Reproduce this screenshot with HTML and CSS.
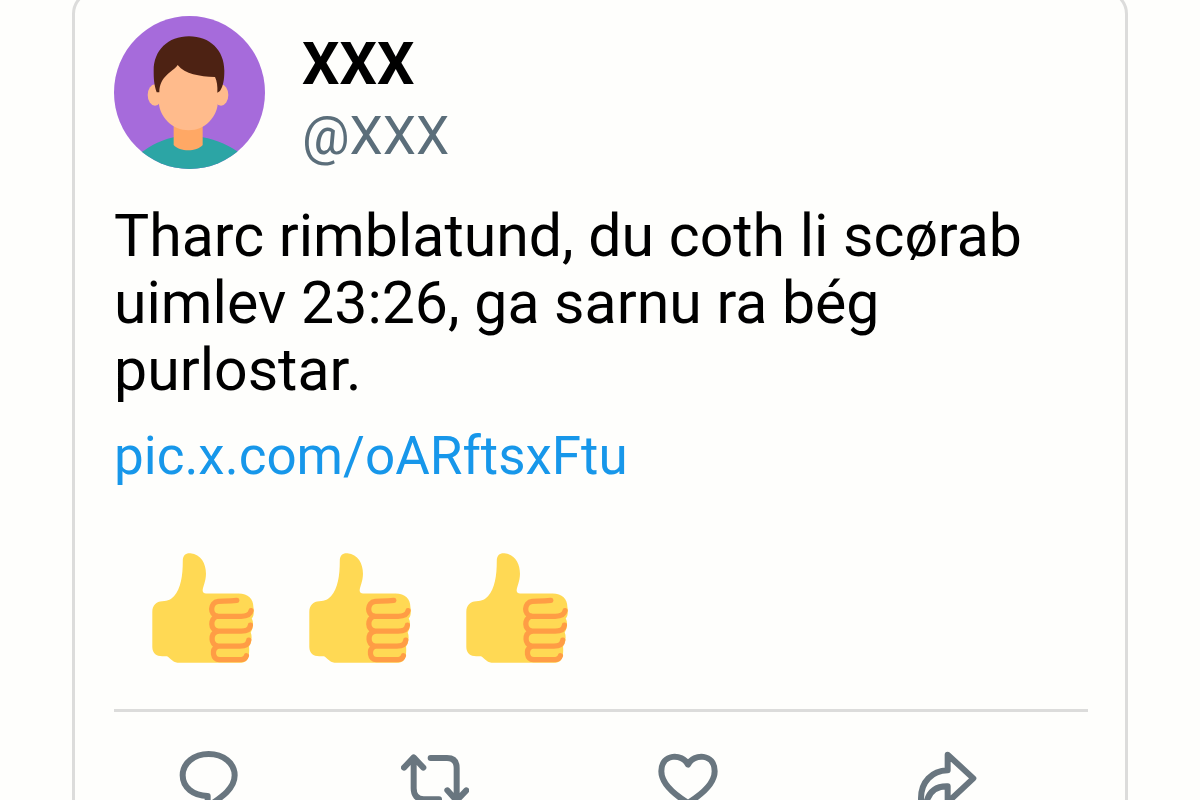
FILE: index.html
```
<!DOCTYPE html>
<html>
  <head>
    <meta charset="utf-8">
    <meta name="viewport" content="width=device-width,initial-scale=1.0">
    <title>Post by XXX</title>
    <link rel="stylesheet" href="styles.css">
  </head>

  <body>
    <!-- Shapes used more than once -->
    <svg class="sprite" aria-hidden="true">
      <symbol id="thumb" viewBox="36 38 306 332">
        <path fill="#ffd954" d="M128 62 C128 45 137 38 151 39 C183 42 198 70 198 101 C198 125 188 140 188 152 Q189 160 198 160 H296 C326 160 341 177 341 200 C344 217 342 229 336 236 C343 248 340 266 333 278 C338 290 336 308 328 320 C330 345 326 369 306 369 H112 C97 369 89 353 80 350 H66 C48 350 36 340 36 322 V216 C36 196 48 185 66 184 C84 183 94 177 102 168 C122 144 128 108 128 62 Z"/>
        <g fill="none" stroke="#ff9d45" stroke-width="16" stroke-linecap="round" stroke-linejoin="round">
          <path d="M291 181 C268 184 248 183 235 184 C210 187 208 225 233 229 H304 C322 229 332 223 334 212"/>
          <path d="M231 229 C210 236 210 270 234 274 H304 C322 274 331 267 332 256"/>
          <path d="M231 275 C211 282 211 315 234 319 H300 C317 319 326 312 327 301"/>
          <path d="M231 320 C215 330 217 358 239 360 H300 C312 360 318 355 320 348"/>
        </g>
      </symbol>
    </svg>

    <article class="card">
      <header class="author">
        <svg class="avatar" viewBox="162 47 453 459" role="img" aria-label="Avatar">
          <rect x="162" y="47" width="453" height="459" fill="#a66bdb"/>
          <path fill="#2ca5a5" d="M230 466 C262 444 290 422 341 411 H428 C470 418 510 436 550 466 V510 H230 Z"/>
          <path fill="#ffa865" d="M341 370 H428 V434 C410 455 359 455 341 434 Z"/>
          <ellipse cx="285" cy="284" rx="22" ry="32" fill="#ffbb8c"/>
          <ellipse cx="483" cy="284" rx="22" ry="32" fill="#ffbb8c"/>
          <path fill="#ffbb8c" d="M296 180 H474 V300 C474 350 435 390 386 390 C337 390 296 350 296 300 Z"/>
          <path fill="#4d2213" d="M290 276 C282 252 281 235 281 211 C281 150 324 108 387 108 C450 108 493 150 493 211 C493 238 490 256 480 272 L472 277 C473 257 471 243 465 230 C417 228 376 222 353 194 C337 217 299 225 298 276 Z"/>
        </svg>
        <div class="names">
          <div class="name">XXX</div>
          <div class="handle">@XXX</div>
        </div>
      </header>

      <p class="text">Tharc rimblatund, du coth li scørab uimlev 23:26, ga sarnu ra bég purlostar.</p>
      <a class="link" href="#">pic.x.com/oARftsxFtu</a>

      <div class="thumbs">
        <svg><use href="#thumb"/></svg>
        <svg><use href="#thumb"/></svg>
        <svg><use href="#thumb"/></svg>
      </div>

      <footer class="actions">
        <button aria-label="Reply">
          <svg class="icon" viewBox="55 30 180 180">
            <path d="M141 168 C98 168 66 142 66 106 C66 70 100 42 144 42 C188 42 222 70 222 106 C222 145 185 170 141 200 Z"/>
          </svg>
        </button>
        <button aria-label="Repost">
          <svg class="icon wide" viewBox="722 30 204 180">
            <path d="M731 83 L760 52 L789 83 M760 56 V145 C760 166 770 178 790 178 H836"/>
            <path d="M811 54 H860 C880 54 889 64 889 84 V178 M861 151 L889 182 L918 151"/>
          </svg>
        </button>
        <button aria-label="Like">
          <svg class="icon" viewBox="53 30 180 180">
            <path d="M143 74 C126 39 63 40 63 94 C63 130 96 160 143 189 C190 160 223 130 223 94 C223 40 160 39 143 74 Z"/>
          </svg>
        </button>
        <button aria-label="Share">
          <svg class="icon" viewBox="831 30 180 180">
            <path d="M923 44 L1000 115 L923 187 V139 C888 138 866 154 858 192 L843 200 V175 C843 125 875 93 923 91 Z"/>
          </svg>
        </button>
      </footer>
    </article>
  </body>
</html>
```
FILE: styles.css
```
body {
  margin: 0;
  height: 100vh;
  overflow: hidden;
  background: #fefefc;
  color: #000;
  font-family: Roboto, "Liberation Sans", Arial, sans-serif;
}

.sprite {
  display: none;
}

/* The card runs past the top and bottom of the window */
.card {
  margin: -10px 6% 0;
  padding: 23px 37px 60px 39px;
  border: 3px solid #dcdcdb;
  border-radius: 24px;
}

/* Author */
.author {
  display: flex;
  gap: 37px;
}
.avatar {
  width: 151px;
  height: 153px;
  border-radius: 50%;
}
.names {
  padding-top: 14px;
}
.name {
  font-size: 59px;
  line-height: 67px;
  font-weight: bold;
}
.handle {
  margin-top: 7px;
  font-size: 53px;
  line-height: 64px;
  color: #5b6e7a;
}

/* Post */
.text {
  margin: 33px 0 21px;
  font-size: 59px;
  line-height: 67px;
}
.link {
  display: block;
  width: fit-content;
  font-size: 53px;
  line-height: 64px;
  color: #1797ea;
  text-decoration: none;
}
.thumbs {
  display: flex;
  gap: 55px;
  margin: 65px 38px 46px;
}
.thumbs svg {
  width: 102px;
  height: 110px;
}

/* Actions */
.actions {
  display: grid;
  grid-template-columns: 222fr 257fr 259fr 171fr;
  padding: 38px 0 0 65px;
  border-top: 3px solid #dcdcdb;
}
.actions button {
  justify-self: start;
  padding: 0;
  border: none;
  background: none;
  cursor: pointer;
}
.icon {
  display: block;
  width: 60px;
  height: 60px;
  fill: none;
  stroke: #69767f;
  stroke-width: 18;
  stroke-linecap: round;
  stroke-linejoin: round;
}
.icon.wide {
  width: 68px;
}
```
